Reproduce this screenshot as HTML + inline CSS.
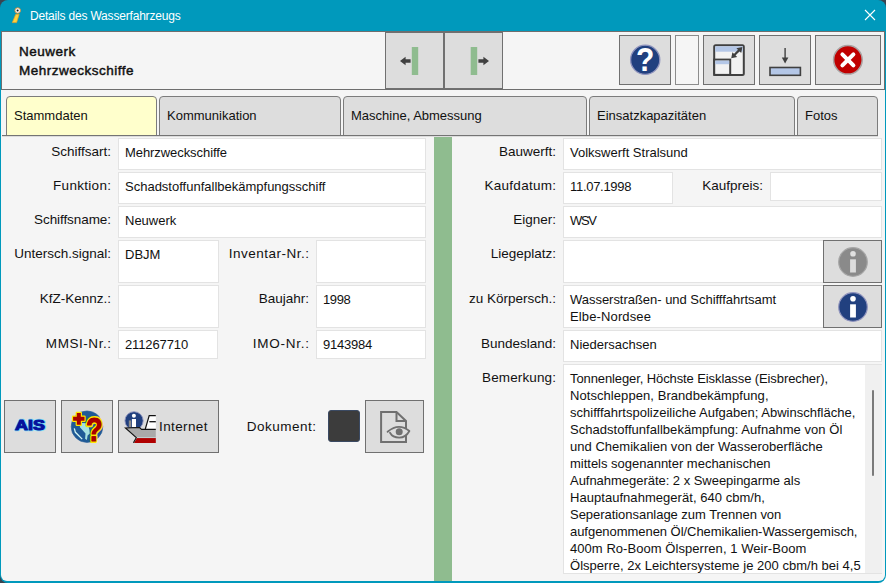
<!DOCTYPE html>
<html lang="de"><head><meta charset="utf-8"><title>Details des Wasserfahrzeugs</title>
<style>
*{box-sizing:border-box;margin:0;padding:0}
html,body{width:886px;height:583px;overflow:hidden;background:#3a4450;font-family:"Liberation Sans",sans-serif;color:#111}
.a{position:absolute}
#win{left:0;top:0;width:886px;height:583px;background:#0099bc;border-radius:8px;overflow:hidden}
#title{left:30px;top:8px;font-size:12px;line-height:16px;color:#fff;white-space:nowrap;letter-spacing:-0.19px}
#hdr{left:1px;top:31px;width:884px;height:59px;background:#f5f5f5;border:1px solid #6e6e6e}
#body{left:1px;top:90px;width:884px;height:491px;background:#f5f5f5;border-radius:0 0 6px 6px}
.hb{font-weight:normal;-webkit-text-stroke:.45px #111;font-size:13.5px;line-height:16px;white-space:nowrap;left:19px;letter-spacing:.5px}
.btn{background:#ddd;border:1px solid #707070}
.tab{top:96px;height:40px;background:#ddd;border:1px solid #7c7c7c;border-radius:4px 4px 0 0;font-size:13px;line-height:38px;padding-left:7px;white-space:nowrap}
.tab.sel{background:#ffffcc}
.lb{font-size:13.5px;line-height:18px;text-align:right;white-space:nowrap}
.tb{background:#fff;border:1px solid #e3e3e3;font-size:13px;line-height:17px;padding:5px 0 0 6px;white-space:nowrap;overflow:hidden}
.tb i{font-style:normal;display:block;white-space:nowrap}
svg{position:absolute;overflow:visible}
</style></head><body>
<div class="a" style="left:876px;top:573px;width:10px;height:10px;background:#fff"></div>
<div id="win" class="a">
<div id="title" class="a">Details des Wasserfahrzeugs</div>
<svg class="a" style="left:864px;top:9px" width="12" height="12" viewBox="0 0 12 12"><path d="M1 1L11 11M11 1L1 11" stroke="#fff" stroke-width="1.1" fill="none"/></svg>
<div id="hdr" class="a"></div>
<div id="body" class="a"></div>
<div class="a hb" style="top:44px">Neuwerk</div>
<div class="a hb" style="top:63px">Mehrzweckschiffe</div>

<!-- header buttons -->
<div class="a btn" style="left:385px;top:32px;width:59px;height:57px"></div>
<div class="a btn" style="left:444px;top:32px;width:59px;height:57px"></div>
<div class="a btn" style="left:619px;top:35px;width:52px;height:50px"></div>
<div class="a" style="left:675px;top:35px;width:24px;height:50px;background:#f5f5f5;border:1px solid #8c8c8c"></div>
<div class="a btn" style="left:703px;top:35px;width:52px;height:50px"></div>
<div class="a btn" style="left:759px;top:35px;width:52px;height:50px"></div>
<div class="a btn" style="left:815px;top:35px;width:66px;height:50px"></div>

<!-- tabs -->
<div class="a tab sel" style="left:6px;width:151px">Stammdaten</div>
<div class="a tab" style="left:159px;width:182px">Kommunikation</div>
<div class="a tab" style="left:343px;width:244px">Maschine, Abmessung</div>
<div class="a tab" style="left:589px;width:206px">Einsatzkapazitäten</div>
<div class="a tab" style="left:797px;width:81px">Fotos</div>

<div class="a" style="left:2px;top:135px;width:876px;height:1px;background:#747474"></div>
<div class="a" style="left:2px;top:136px;width:876px;height:1px;background:#dcdcdc"></div>
<!-- splitter -->
<div class="a" style="left:434px;top:137px;width:18px;height:444px;background:#8fbc8f"></div>

<!-- left labels -->
<div class="a lb" style="left:0;width:111px;top:143px">Schiffsart:</div>
<div class="a lb" style="letter-spacing:0.3px;left:0;width:111.3px;top:177px">Funktion:</div>
<div class="a lb" style="letter-spacing:-0.08px;left:0;width:110.92px;top:211px">Schiffsname:</div>
<div class="a lb" style="left:0;width:111px;top:245px">Untersch.signal:</div>
<div class="a lb" style="left:0;width:111px;top:290px">KfZ-Kennz.:</div>
<div class="a lb" style="letter-spacing:0.55px;left:0;width:111.55px;top:335px">MMSI-Nr.:</div>
<div class="a lb" style="letter-spacing:0.5px;left:200px;width:109.5px;top:245px">Inventar-Nr.:</div>
<div class="a lb" style="left:200px;width:109px;top:290px">Baujahr:</div>
<div class="a lb" style="letter-spacing:0.75px;left:200px;width:109.75px;top:335px">IMO-Nr.:</div>

<!-- left boxes -->
<div class="a tb" style="letter-spacing:-.07px;left:118px;top:138px;width:308px;height:32px">Mehrzweckschiffe</div>
<div class="a tb" style="left:118px;top:172px;width:308px;height:32px">Schadstoffunfallbekämpfungsschiff</div>
<div class="a tb" style="left:118px;top:206px;width:308px;height:32px">Neuwerk</div>
<div class="a tb" style="left:118px;top:240px;width:101px;height:43px">DBJM</div>
<div class="a tb" style="left:316px;top:240px;width:110px;height:43px"></div>
<div class="a tb" style="left:118px;top:285px;width:101px;height:43px"></div>
<div class="a tb" style="letter-spacing:-0.4px;left:316px;top:285px;width:110px;height:43px">1998</div>
<div class="a tb" style="letter-spacing:-0.12px;left:118px;top:330px;width:100px;height:29px">211267710</div>
<div class="a tb" style="letter-spacing:-0.22px;left:316px;top:330px;width:110px;height:29px">9143984</div>

<!-- bottom-left buttons -->
<div class="a btn" style="left:4px;top:400px;width:52px;height:53px"></div>
<div class="a btn" style="left:61px;top:400px;width:52px;height:53px"></div>
<div class="a btn" style="left:118px;top:400px;width:101px;height:53px"></div>
<div class="a" style="left:159px;top:418px;font-size:13.5px;line-height:18px;letter-spacing:.38px">Internet</div>
<div class="a lb" style="letter-spacing:0.5px;left:220px;width:96.5px;top:418px">Dokument:</div>
<div class="a" style="left:328px;top:410px;width:32px;height:32px;background:#3c3c3c;border:1px solid #3b4a63;border-radius:3px"></div>
<div class="a btn" style="left:365px;top:400px;width:59px;height:53px"></div>

<!-- right labels -->
<div class="a lb" style="left:452px;width:104px;top:143px">Bauwerft:</div>
<div class="a lb" style="letter-spacing:0.27px;left:452px;width:104.27px;top:177px">Kaufdatum:</div>
<div class="a lb" style="left:452px;width:104px;top:211px">Eigner:</div>
<div class="a lb" style="left:452px;width:104px;top:245px">Liegeplatz:</div>
<div class="a lb" style="left:452px;width:104px;top:290px">zu Körpersch.:</div>
<div class="a lb" style="left:452px;width:104px;top:335px">Bundesland:</div>
<div class="a lb" style="letter-spacing:0.12px;left:452px;width:104.12px;top:369px">Bemerkung:</div>
<div class="a lb" style="left:680px;width:83px;top:177px">Kaufpreis:</div>

<!-- right boxes -->
<div class="a tb" style="left:563px;top:138px;width:319px;height:32px">Volkswerft Stralsund</div>
<div class="a tb" style="letter-spacing:-0.3px;left:563px;top:172px;width:110px;height:32px">11.07.1998</div>
<div class="a tb" style="left:770px;top:172px;width:112px;height:29px"></div>
<div class="a tb" style="letter-spacing:-1.3px;left:563px;top:206px;width:319px;height:32px">WSV</div>
<div class="a tb" style="left:563px;top:240px;width:261px;height:43px"></div>
<div class="a btn" style="left:823px;top:240px;width:59px;height:43px"></div>
<div class="a tb" style="left:563px;top:285px;width:261px;height:43px;line-height:16.5px;padding-top:6px"><i style="letter-spacing:-.03px">Wasserstraßen- und Schifffahrtsamt</i><i style="letter-spacing:0.13px">Elbe-Nordsee</i></div>
<div class="a btn" style="left:823px;top:285px;width:59px;height:43px"></div>
<div class="a tb" style="left:563px;top:330px;width:319px;height:32px">Niedersachsen</div>
<div class="a tb" style="left:563px;top:364px;width:319px;height:210px;border-right:0"><i style="letter-spacing:-0.100px">Tonnenleger, Höchste Eisklasse (Eisbrecher),</i><i style="letter-spacing:0.066px">Notschleppen, Brandbekämpfung,</i><i style="letter-spacing:0.006px">schifffahrtspolizeiliche Aufgaben; Abwinschfläche,</i><i style="letter-spacing:0.036px">Schadstoffunfallbekämpfung: Aufnahme von Öl</i><i style="letter-spacing:0.026px">und Chemikalien von der Wasseroberfläche</i><i style="letter-spacing:-0.010px">mittels sogenannter mechanischen</i><i style="letter-spacing:-0.031px">Aufnahmegeräte: 2 x Sweepingarme als</i><i style="letter-spacing:0.041px">Hauptaufnahmegerät, 640 cbm/h,</i><i style="letter-spacing:-0.037px">Seperationsanlage zum Trennen von</i><i style="letter-spacing:-0.043px">aufgenommenen Öl/Chemikalien-Wassergemisch,</i><i style="letter-spacing:0.053px">400m Ro-Boom Ölsperren, 1 Weir-Boom</i><i style="letter-spacing:0.019px">Ölsperre, 2x Leichtersysteme je 200 cbm/h bei 4,5</i></div>
<div class="a" style="left:865px;top:365px;width:17px;height:208px;background:#f0f0f0"></div>
<div class="a" style="left:872px;top:390px;width:2px;height:86px;background:#7a7a7a;border-radius:1px"></div>

<!-- title icon -->
<svg style="left:0;top:0" width="40" height="31" viewBox="0 0 40 31"><path d="M15.8 14.2h3.4l-2.6 8.4h-4.3z" fill="#ffd23c" stroke="#f0a020" stroke-width=".7"/><circle cx="17.7" cy="10.5" r="2.8" fill="#f4f4f4" stroke="#d08a30" stroke-width=".9"/><circle cx="17.6" cy="10.4" r="1" fill="#111"/></svg>
<!-- prev / next -->
<svg style="left:385px;top:32px" width="118" height="57" viewBox="385 32 118 57"><rect x="411.8" y="47" width="6.4" height="28" fill="#8fbc8f"/><path d="M400 61l5.6-4.2v2.4h5v3.6h-5v2.4z" fill="#404040"/><rect x="470.7" y="47" width="6.5" height="28" fill="#8fbc8f"/><path d="M489 61l-5.6-4.2v2.4h-5v3.6h5v2.4z" fill="#404040"/></svg>
<!-- help -->
<svg style="left:619px;top:35px" width="52" height="50" viewBox="619 35 52 50"><circle cx="645.2" cy="59.8" r="14.6" fill="#21407f" stroke="#8f93bd" stroke-width="1.3"/><text transform="translate(645.2 71) scale(1 1.12)" text-anchor="middle" font-family="Liberation Sans, sans-serif" font-weight="bold" font-size="30" fill="#fff">?</text></svg>
<!-- layout -->
<svg style="left:703px;top:35px" width="52" height="50" viewBox="703 35 52 50"><rect x="714.2" y="45.3" width="29.6" height="29.6" rx="1.5" fill="#f2f2f2" stroke="#404040" stroke-width="2"/><rect x="715.2" y="46.3" width="27.6" height="5.4" fill="#b4c7e7"/><rect x="714.2" y="59.6" width="16" height="15.3" fill="#f2f2f2" stroke="#404040" stroke-width="2"/><rect x="715.2" y="60.6" width="14" height="3.6" fill="#b4c7e7"/><path d="M733.6 55.8L740 49.4" stroke="#404040" stroke-width="2.2"/><path d="M731.2 58.2l1.2-6 4.8 4.8zM742.4 47l-1.2 6-4.8-4.8z" fill="#404040"/></svg>
<!-- download -->
<svg style="left:759px;top:35px" width="52" height="50" viewBox="759 35 52 50"><path d="M785.1 48v11" stroke="#404040" stroke-width="1.4"/><path d="M781.8 57.4h6.6l-3.3 6z" fill="#404040"/><rect x="770" y="67.5" width="30.4" height="7.8" fill="#b4c7e7" stroke="#404040" stroke-width="1.6"/></svg>
<!-- close -->
<svg style="left:815px;top:35px" width="66" height="50" viewBox="815 35 66 50"><circle cx="847.9" cy="59.8" r="14.3" fill="#c00000" stroke="#aaa2a2" stroke-width="1.5"/><path d="M842.4 54.3l11 11M853.4 54.3l-11 11" stroke="#fff" stroke-width="4" stroke-linecap="round"/></svg>
<!-- info buttons -->
<svg style="left:823px;top:240px" width="59" height="43" viewBox="823 240 59 43"><circle cx="853" cy="262" r="14.3" fill="#8a8a8a" stroke="#a6a6a6" stroke-width="1.2"/><circle cx="853" cy="253.8" r="2.8" fill="#e0e0e0"/><rect x="850.1" y="259.3" width="5.8" height="13.2" fill="#dcdcdc"/></svg>
<svg style="left:823px;top:285px" width="59" height="43" viewBox="823 285 59 43"><circle cx="853" cy="307" r="14.3" fill="#21407f" stroke="#8f93bd" stroke-width="1.2"/><circle cx="853" cy="298.8" r="2.8" fill="#fff"/><rect x="850.1" y="304.3" width="5.8" height="13.2" fill="#fff"/></svg>
<!-- AIS -->
<svg style="left:4px;top:400px" width="52" height="53" viewBox="4 400 52 53"><text transform="translate(30.1 430.4) scale(1.2 1)" text-anchor="middle" font-family="Liberation Sans, sans-serif" font-weight="bold" font-size="15" fill="#06109c" stroke="#6fe3ff" stroke-width="2.6" stroke-linejoin="round" opacity=".85">AIS</text><text transform="translate(30.1 430.4) scale(1.2 1)" text-anchor="middle" font-family="Liberation Sans, sans-serif" font-weight="bold" font-size="15" fill="#06109c" stroke="#06109c" stroke-width="1.1" stroke-linejoin="round">AIS</text></svg>
<!-- globe -->
<svg style="left:61px;top:400px" width="52" height="53" viewBox="61 400 52 53"><circle cx="87" cy="426.7" r="15.8" fill="#1f5a96" stroke="#2a6098" stroke-width=".6"/><path d="M79.7 426.9l1.8-4 6.1.4 1.8 6.5.4 3.6-2.2 2.1-.7 4.4-1.8-1.1.4-5.4-4-4.3z" fill="#a6e0e0"/><path d="M74.3 428.3l1.1 4 6.8 6.8" fill="none" stroke="#d4f6f4" stroke-width="1.3"/><path d="M76.8 412.9h4v3.9h3.7v4h-3.7v3.9h-4v-3.9h-3.7v-4h3.7z" fill="#a80000" stroke="#ffe600" stroke-width="2.4" stroke-linejoin="round" paint-order="stroke"/><text transform="translate(94.2 440.9) scale(.8 1)" text-anchor="middle" font-family="Liberation Sans, sans-serif" font-weight="bold" font-size="34" fill="#a80000" stroke="#ffe600" stroke-width="4.2" stroke-linejoin="round" paint-order="stroke">?</text><text transform="translate(94.2 440.9) scale(.8 1)" text-anchor="middle" font-family="Liberation Sans, sans-serif" font-weight="bold" font-size="34" fill="#a80000" stroke="#a80000" stroke-width=".9">?</text></svg>
<!-- ship -->
<svg style="left:118px;top:400px" width="101" height="53" viewBox="118 400 101 53"><circle cx="134.05" cy="420.75" r="9.1" fill="#21407f" stroke="#8f93bd" stroke-width=".9"/><circle cx="133.9" cy="415.7" r="2" fill="#fff"/><rect x="131.9" y="419" width="4.1" height="8" fill="#fff"/><rect x="128.8" y="420.4" width="2.3" height="7" fill="#8c8c8c"/><path d="M125.4 428l14.1-.5 2.1 1.9h14.2v8.6h-19.6z" fill="#aaa"/><path d="M136.9 438h18.9v4.9h-21.8z" fill="#b00000"/><path d="M136 437.6h19.8" stroke="#c8dcdc" stroke-width=".8"/><path d="M145.2 429.4l4-14h6.6v14z" fill="#fff"/><path d="M145.3 429l3.9-13.4h6.6" fill="none" stroke="#111" stroke-width="1.2"/><path d="M149.4 421.7h6.4" stroke="#111" stroke-width="1.3"/><path d="M133.4 442.8l2.9-5.1-10.9-9.7 14.1-.5 2.1 1.9h14.2" fill="none" stroke="#111" stroke-width="1.1" stroke-linejoin="miter"/></svg>
<!-- doc view -->
<svg style="left:365px;top:400px" width="59" height="53" viewBox="365 400 59 53"><path d="M381.1 412h15.4l9.5 9v20.9h-24.9z" fill="none" stroke="#707070" stroke-width="2" stroke-linejoin="miter"/><path d="M396.5 412v9h9.5" fill="none" stroke="#707070" stroke-width="2"/><path d="M387.6 431.8q11-9.4 21.8-.8q-3.6 6.600-10.200 6.600q-6.600 0-9.200-4.800" fill="#ddd" stroke="#707070" stroke-width="1.8" stroke-linecap="round" stroke-linejoin="round"/><circle cx="399.2" cy="431.8" r="3.5" fill="#707070"/></svg>
</div>
</body></html>
